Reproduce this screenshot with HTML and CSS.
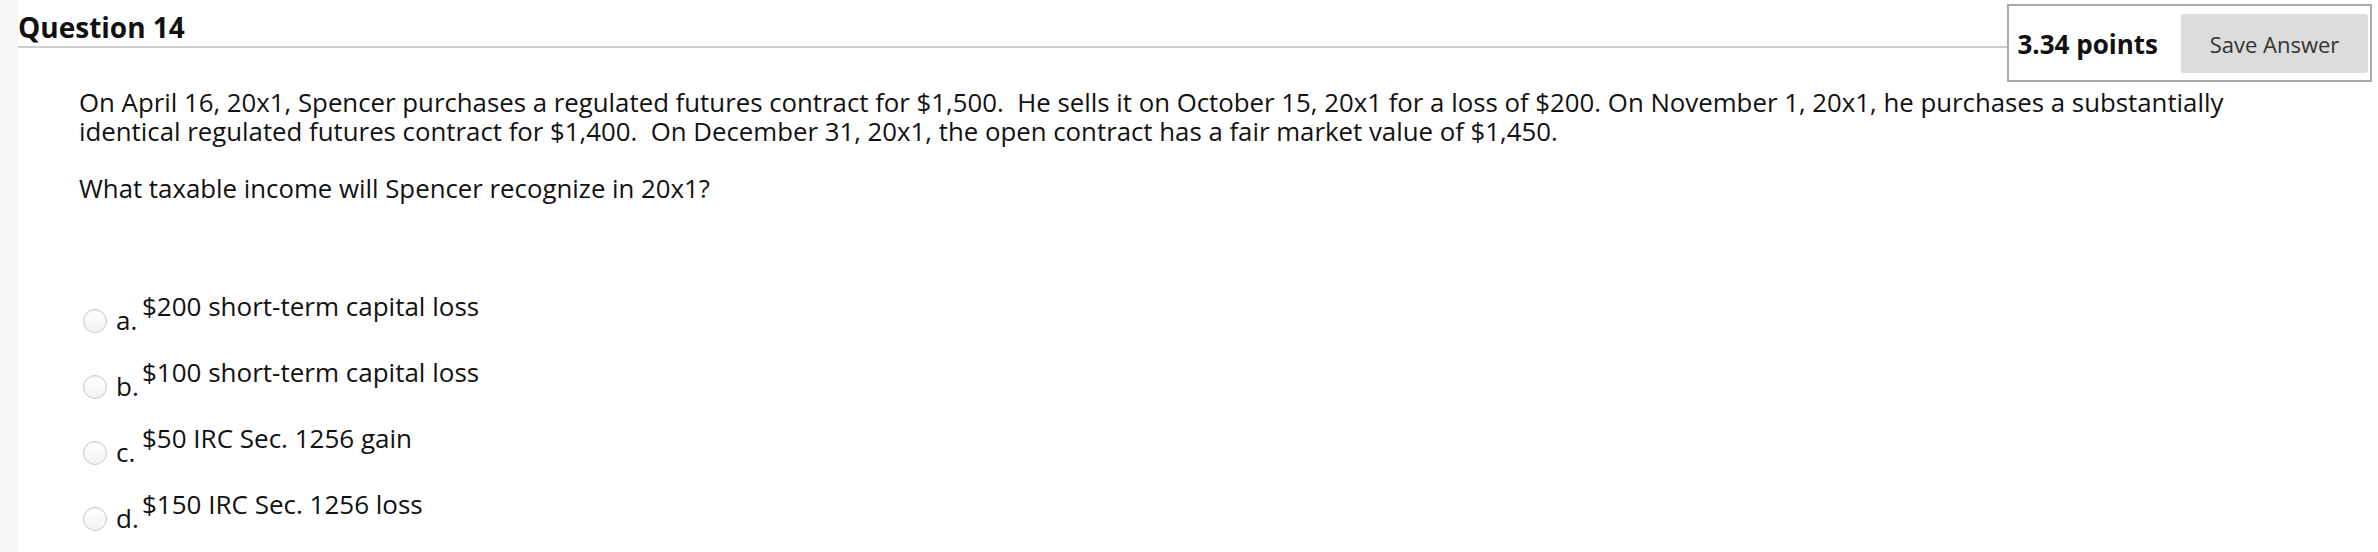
FILE: index.html
```html
<!DOCTYPE html>
<html lang="en">
<head>
<meta charset="utf-8">
<title>Question 14</title>
<link rel="stylesheet" href="styles.css">
</head>
<body>
<div class="page">
  <div class="strip"></div>
  <div class="main">
    <div class="header">
      <h2 class="title">Question 14</h2>
      <div class="points-box">
        <span class="points">3.34 points</span>
        <button class="save">Save Answer</button>
      </div>
    </div>
    <div class="stem">
      <p class="para first">On April 16, 20x1, Spencer purchases a regulated futures contract for $1,500.&nbsp; He sells it on October 15, 20x1 for a loss of $200. On November 1, 20x1, he purchases a substantially identical regulated futures contract for $1,400.&nbsp; On December 31, 20x1, the open contract has a fair market value of $1,450.</p>
      <p class="para">What taxable income will Spencer recognize in 20x1?</p>
    </div>
    <div class="answers">
      <div class="answer"><span class="radio"></span><span class="letter">a.</span><span class="text">$200 short-term capital loss</span></div>
      <div class="answer"><span class="radio"></span><span class="letter">b.</span><span class="text">$100 short-term capital loss</span></div>
      <div class="answer"><span class="radio"></span><span class="letter">c.</span><span class="text">$50 IRC Sec. 1256 gain</span></div>
      <div class="answer"><span class="radio"></span><span class="letter">d.</span><span class="text">$150 IRC Sec. 1256 loss</span></div>
    </div>
  </div>
</div>
</body>
</html>
```

FILE: styles.css
```css
html, body {
  margin: 0;
  padding: 0;
  background: #ffffff;
}
body {
  font-family: "Open Sans", "Noto Sans", sans-serif;
  color: #111;
}
.page {
  display: flex;
  min-height: 552px;
}
.strip {
  width: 18px;
  flex: none;
  background: #f6f6f6;
}
.main {
  flex: 1;
  min-width: 0;
}
.header {
  display: flex;
  align-items: flex-start;
  padding-right: 6px;
}
.title {
  flex: 1;
  margin: 0;
  padding-top: 8px;
  font-size: 28px;
  line-height: 38px;
  font-weight: 700;
  border-bottom: 2px solid #cccccc;
  color: #111;
}
.points-box {
  margin-top: 4px;
  border: 2px solid #aaaaaa;
  padding: 8px 2px 7px 8px;
  display: flex;
  align-items: center;
  gap: 23px;
  background: #fff;
}
.points {
  font-size: 26px;
  font-weight: 700;
  color: #111;
}
.save {
  height: 59px;
  width: 187px;
  border: none;
  border-radius: 3px;
  background: #dcdcdc;
  font-family: "Open Sans", "Noto Sans", sans-serif;
  font-size: 22px;
  color: #333;
  padding: 0;
}
.stem {
  padding-left: 61px;
  padding-right: 100px;
  margin-top: 6px;
}
.para {
  margin: 0;
  font-size: 25.8px;
  line-height: 29px;
  color: #111;
}
.para.first {
  margin-bottom: 28px;
}
.answers {
  margin-top: 88px;
  padding-left: 65px;
  display: flex;
  flex-direction: column;
  gap: 22px;
}
.answer {
  display: flex;
  align-items: flex-start;
  height: 44px;
}
.radio {
  width: 22px;
  height: 22px;
  margin-top: 18px;
  border: 1px solid #c8c8c8;
  border-radius: 50%;
  background: linear-gradient(#ffffff, #f2f2f2);
  box-shadow: inset 0 1px 1px rgba(0,0,0,0.06);
  flex: none;
}
.letter {
  margin-left: 9px;
  margin-top: 14px;
  font-size: 26px;
  line-height: 30px;
  width: 26px;
  color: #111;
}
.text {
  font-size: 26px;
  line-height: 30px;
  color: #111;
}
```
